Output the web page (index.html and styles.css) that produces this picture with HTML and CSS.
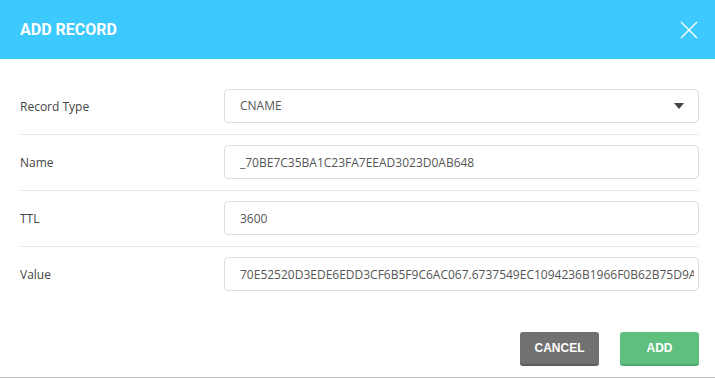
FILE: index.html
```html
<!DOCTYPE html>
<html lang="en">
<head>
  <meta charset="UTF-8">
  <title>Add Record</title>
  <link rel="stylesheet" href="styles.css">
</head>
<body>

<div class="modal">
  <div class="modal-header">
    <h2>ADD RECORD</h2>
    <button class="close-btn" aria-label="Close">
      <svg width="18" height="18" viewBox="0 0 18 18">
        <path d="M1 1 L17 17 M17 1 L1 17" stroke="#fff" stroke-width="1.4" fill="none"/>
      </svg>
    </button>
  </div>

  <div class="modal-body">
    <div class="form-row">
      <label>Record Type</label>
      <div class="field select">
        <span>CNAME</span>
        <span class="caret"></span>
      </div>
    </div>
    <div class="form-row">
      <label>Name</label>
      <input class="field" type="text" value="_70BE7C35BA1C23FA7EEAD3023D0AB648">
    </div>
    <div class="form-row">
      <label>TTL</label>
      <input class="field" type="text" value="3600">
    </div>
    <div class="form-row last">
      <label>Value</label>
      <input class="field" type="text" value="70E52520D3EDE6EDD3CF6B5F9C6AC067.6737549EC1094236B1966F0B62B75D9A.comodoca.com">
    </div>
  </div>

  <div class="modal-footer">
    <button class="btn btn-cancel">CANCEL</button>
    <button class="btn btn-add">ADD</button>
  </div>
</div>

</body>
</html>
```

FILE: styles.css
```css
body {
  margin: 0;
  background: #fff;
  font-family: "Open Sans", Arial, sans-serif;
}
.modal {
  width: 715px;
  height: 378px;
  box-sizing: border-box;
  border-bottom: 1px solid #bdbdbd;
  display: flex;
  flex-direction: column;
}
.modal-header {
  height: 59px;
  background: #3cc9fd;
  display: flex;
  align-items: center;
  justify-content: space-between;
  padding: 0 17px 0 20px;
}
.modal-header h2 {
  margin: 0;
  color: #fff;
  font-family: Roboto, "Open Sans", sans-serif;
  font-size: 16px;
  font-weight: 700;
}
.close-btn {
  background: none;
  border: none;
  padding: 0;
  width: 18px;
  height: 18px;
  cursor: pointer;
}
.modal-body {
  padding: 30px 16px 0 20px;
}
.form-row {
  display: flex;
  align-items: center;
  border-bottom: 1px solid #e9e9e9;
  padding-bottom: 11px;
  margin-bottom: 10px;
}
.form-row.last {
  border-bottom: none;
}
.form-row label {
  width: 204px;
  font-size: 12px;
  color: #444;
}
.field {
  flex: 1;
  min-width: 0;
  height: 34px;
  box-sizing: border-box;
  margin: 0;
  border: 1px solid #dcdcdc;
  border-radius: 4px;
  padding: 0 4px 0 15px;
  font-family: "Open Sans", Arial, sans-serif;
  font-size: 12px;
  color: #555;
  background: #fff;
  line-height: 32px;
  white-space: nowrap;
  overflow: hidden;
}
.select {
  display: flex;
  justify-content: space-between;
  align-items: center;
  padding-right: 14px;
}
.caret {
  width: 0;
  height: 0;
  border-left: 5px solid transparent;
  border-right: 5px solid transparent;
  border-top: 6px solid #444;
}
.modal-footer {
  margin-top: auto;
  display: flex;
  justify-content: flex-end;
  gap: 21px;
  padding: 0 16px 11px 0;
}
.btn {
  width: 79px;
  height: 34px;
  border: none;
  border-radius: 3px;
  color: #fff;
  font-family: "Liberation Sans", Arial, sans-serif;
  font-weight: 700;
  font-size: 12px;
  cursor: pointer;
}
.btn-cancel {
  background: #717171;
  border-bottom: 2px solid #5e5e5e;
}
.btn-add {
  background: #5ebf7f;
  border-bottom: 2px solid #4dab6c;
}
```
